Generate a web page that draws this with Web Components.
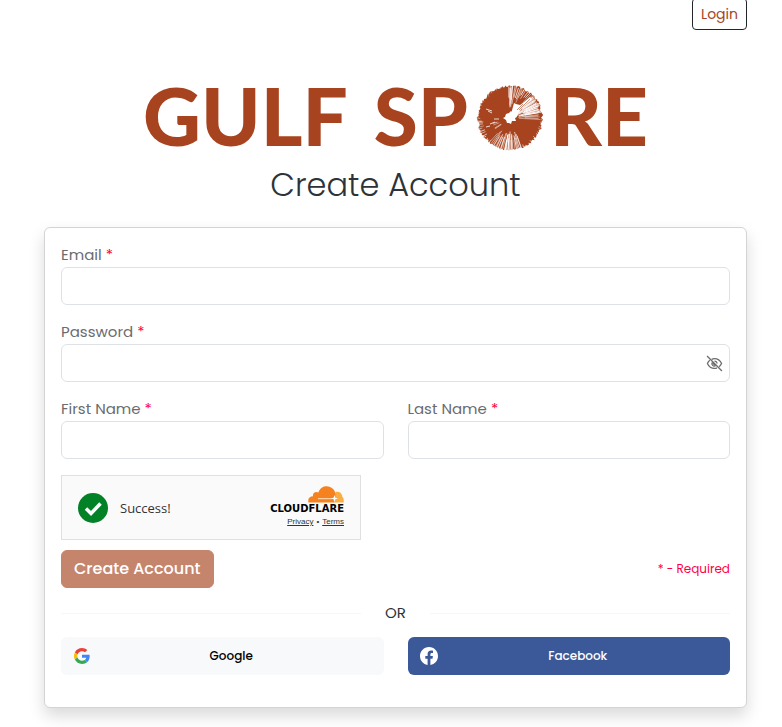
<!DOCTYPE html>
<html lang="en">
<head>
<meta charset="utf-8">
<meta name="viewport" content="width=device-width, initial-scale=1">
<title>Gulf Spore - Create Account</title>
<style>
    :root {
        --brand: #a7441f;
        --required: #ff0044;
    }

    body {
        margin: 0;
        background: #fff;
        color: #2d3338;
        font-family: Poppins, Inter, sans-serif;
        font-size: 15px;
    }
</style>
</head>
<body>
<signup-page>
    <signup-card>
        <form-field name="email" type="email">Email</form-field>
        <form-field name="password" type="password">Password</form-field>
        <form-field name="first" type="text" half>First Name</form-field>
        <form-field name="last" type="text" half>Last Name</form-field>
        <turnstile-box slot="check">Success!</turnstile-box>
        <social-button slot="social" brand="google">Google</social-button>
        <social-button slot="social" brand="facebook">Facebook</social-button>
    </signup-card>
</signup-page>

<script>
/**
 * The Gulf Spore wordmark, with a spore print in place of the O
 */
class SporeLogo extends HTMLElement {
    constructor() {
        super();
        const shadow = this.attachShadow({ mode: "open" });
        shadow.innerHTML = `
            <style>
                :host {
                    display: flex;
                    justify-content: center;
                    align-items: center;
                    color: var(--brand);
                    font: 900 80px/80px Lato, sans-serif;
                }
                .word { margin-right: 26px; }
                svg { width: 68px; height: 68px; margin: 6px 6px 0 8px; }
            </style>
            <span class="word">GULF</span>
            <span>SP</span>
            <svg viewBox="-34 -34 68 68" role="img" aria-label="O"></svg>
            <span>RE</span>`;
        shadow.querySelector("svg").innerHTML = this.drawPrint();
    }

    // Point on the print, angle in degrees clockwise from the right
    point(angle, radius) {
        const a = angle * Math.PI / 180;
        return (Math.cos(a) * radius).toFixed(2) + " " + (Math.sin(a) * radius).toFixed(2);
    }

    drawPrint() {
        let seed = 4211;
        const rand = () => {
            seed = (seed * 16807) % 2147483647;
            return seed / 2147483647;
        };

        // rough outer edge
        const edge = [];
        for (let a = 0; a < 360; a += 2) {
            edge.push(this.point(a, 31 + rand() * 2.2));
        }
        let out = `<path fill="currentColor" d="M${edge.join("L")}Z"/>`;

        // gaps between the gills: [from, to, count, inner, outer, width]
        const gaps = [
            [66, 130, 24, 14, 35, .7],
            [84, 100, 5, 6, 35, .8],
            [264, 292, 9, 14, 34, .7],
            [267, 274, 3, 4, 33, .9],
            [292, 320, 9, 20, 34, .7],
            [316, 350, 22, 8, 32, .8],
            [350, 364, 5, 8, 31, .5],
            [0, 66, 12, 29, 35, .6],
            [130, 180, 14, 27, 35, .6],
            [140, 162, 4, 10, 20, .6],
            [180, 262, 16, 30, 35, .5]
        ];
        gaps.forEach(([from, to, count, inner, outer, width]) => {
            for (let i = 0; i < count; i++) {
                const a = from + (to - from) * (i + rand()) / count;
                const start = inner + rand() * (outer - inner) * .4;
                const end = outer - rand() * 3;
                out += `<path stroke="#fff" stroke-width="${(width * (.6 + rand() * .7)).toFixed(2)}" d="M${this.point(a, start)}L${this.point(a + 1, end)}"/>`;
            }
        });

        // flecks on the left half
        out += `<path stroke="#fff" stroke-width=".8" d="M-24 -9l6 2M-22 -7l4 2M-20 6l5-2M-24 9l4-1M-16 1l5 0"/>`;

        // open wedge and hollow centre
        out += `
            <path fill="#fff" d="M1 -4 4 -15 6 -14 10 -13 14 -16 20 -21 22 -19 14 -12 9 -6 6 0Z"/>
            <path stroke="currentColor" stroke-width=".6" d="M7 -8 13 -14M9 -8 20 -19"/>
            <path fill="#fff" d="M-5 -1-4 -4 -1 -5 1 -7 3 -5 5 -4 8 -3 5 0 6 3 2 3 1 6-1 5-3 5-4 2-7 0Z"/>`;
        return out;
    }
}
customElements.define("spore-logo", SporeLogo);


/**
 * Page frame: login button, logo, heading and the slotted card
 */
class SignupPage extends HTMLElement {
    constructor() {
        super();
        const shadow = this.attachShadow({ mode: "open" });
        shadow.innerHTML = `
            <style>
                :host {
                    display: block;
                    padding: 0 35px 24px 44px;
                }
                header {
                    display: flex;
                    justify-content: flex-end;
                    margin-top: -2px;
                }
                .login {
                    padding: 4px 8px;
                    border: 1px solid #212529;
                    border-radius: 4px;
                    background: #fff;
                    color: var(--brand);
                    font: inherit;
                    font-size: 14px;
                    line-height: 22px;
                }
                spore-logo { margin-top: 45px; }
                h1 {
                    margin: 8px 0 20px;
                    font-size: 32px;
                    font-weight: 300;
                    line-height: 44px;
                    text-align: center;
                }
            </style>
            <header><button class="login" type="button">Login</button></header>
            <main>
                <spore-logo></spore-logo>
                <h1>Create Account</h1>
                <slot></slot>
            </main>`;
    }
}
customElements.define("signup-page", SignupPage);


/**
 * Card with the form fields, submit row and social logins
 */
class SignupCard extends HTMLElement {
    constructor() {
        super();
        const shadow = this.attachShadow({ mode: "open" });
        shadow.innerHTML = `
            <style>
                :host {
                    display: block;
                    padding: 16px 16px 32px;
                    border: 1px solid #d3d4d5;
                    border-radius: 6px;
                    background: #fff;
                    box-shadow: 0 8px 16px rgba(0, 0, 0, .15);
                }
                .fields, .social {
                    display: grid;
                    grid-template-columns: 1fr 1fr;
                    gap: 16px 24px;
                }
                .check { margin: 16px 0 10px; }
                .submit {
                    display: flex;
                    justify-content: space-between;
                    align-items: center;
                }
                .submit button {
                    height: 38px;
                    padding: 0 12px;
                    border: 1px solid var(--brand);
                    border-radius: 6px;
                    background: var(--brand);
                    color: #fff;
                    font: inherit;
                    font-size: 16px;
                    font-weight: 500;
                    line-height: 24px;
                    opacity: .65;
                }
                .submit small {
                    color: var(--required);
                    font-size: 12px;
                }
                .or {
                    display: flex;
                    align-items: center;
                    gap: 24px;
                    margin: 13px 0 12px;
                    line-height: 24px;
                }
                hr {
                    flex: 1;
                    margin: 0;
                    border: 0;
                    border-top: 1px solid #f6f7f8;
                }
            </style>
            <div class="fields"><slot></slot></div>
            <div class="check"><slot name="check"></slot></div>
            <div class="submit">
                <button type="submit" disabled>Create Account</button>
                <small>* - Required</small>
            </div>
            <div class="or"><hr><span>OR</span><hr></div>
            <div class="social"><slot name="social"></slot></div>`;
    }
}
customElements.define("signup-card", SignupCard);


/**
 * Labelled text box. Attributes: name, type, half (takes one column only)
 */
class FormField extends HTMLElement {
    constructor() {
        super();
        const shadow = this.attachShadow({ mode: "open" });
        const type = this.getAttribute("type");
        shadow.innerHTML = `
            <style>
                :host { display: block; grid-column: 1 / -1; }
                :host([half]) { grid-column: auto; }
                label {
                    display: block;
                    padding-bottom: 2px;
                    color: #6a6c6f;
                    line-height: 21px;
                }
                label span { color: var(--required); }
                .box { position: relative; }
                input {
                    display: block;
                    box-sizing: border-box;
                    width: 100%;
                    height: 38px;
                    padding: 6px 12px;
                    border: 1px solid #dee2e6;
                    border-radius: 6px;
                    background: #fff;
                    font: inherit;
                }
                .eye {
                    position: absolute;
                    top: 0;
                    bottom: 0;
                    right: 7px;
                    display: flex;
                    align-items: center;
                    padding: 0;
                    border: 0;
                    background: none;
                    color: #6c6c6c;
                }
                .eye svg { width: 17px; height: 17px; }
            </style>
            <label for="field"><slot></slot> <span>*</span></label>
            <div class="box">
                <input id="field" name="${this.getAttribute("name")}" type="${type}" required>
            </div>`;

        if (type === "password") {
            this.addToggle();
        }
    }

    // Show / hide button over the end of the password box
    addToggle() {
        const box = this.shadowRoot.querySelector(".box");
        const input = this.shadowRoot.querySelector("input");
        const toggle = document.createElement("button");
        toggle.type = "button";
        toggle.className = "eye";
        toggle.setAttribute("aria-label", "Show password");
        toggle.innerHTML = `
            <svg viewBox="0 0 24 24" fill="none" stroke="currentColor" stroke-width="1.800">
                <path d="M8 6.200C9.200 5.500 10.500 5 12 5c5 0 8.500 3.700 10 7-.8 1.700-1.900 3.200-3.400 4.500M15.500 18.200c-1 .5-2.200.8-3.500.8-5 0-8.500-3.700-10-7 .8-1.800 1.900-3.300 3.400-4.500"/>
                <path d="M12 8.500a3.500 3.500 0 0 1 3.500 3.500M8.700 10.500a3.500 3.500 0 0 0 4.800 4.700"/>
                <path d="M9 10.500l4.500 4.500" stroke-width="2.500"/>
                <path d="M1.500 1.500l21 21"/>
            </svg>`;
        toggle.addEventListener("click", () => {
            input.type = input.type === "password" ? "text" : "password";
        });
        box.append(toggle);
    }
}
customElements.define("form-field", FormField);


/**
 * Cloudflare verification box in its passed state
 */
class TurnstileBox extends HTMLElement {
    constructor() {
        super();
        const shadow = this.attachShadow({ mode: "open" });
        shadow.innerHTML = `
            <style>
                :host {
                    display: flex;
                    align-items: center;
                    box-sizing: border-box;
                    max-width: 300px;
                    height: 65px;
                    padding: 0 16px;
                    border: 1px solid #e0e0e0;
                    background: #fafafa;
                    color: #333;
                    font: 13px/20px "Segoe UI", "Open Sans", sans-serif;
                }
                .tick { width: 30px; height: 30px; margin-right: 12px; }
                .brand {
                    display: flex;
                    flex-direction: column;
                    align-items: flex-end;
                    margin-left: auto;
                }
                .cloud { width: 36px; height: 17px; }
                b {
                    color: #000;
                    font: bold 10px/12px "DejaVu Sans", sans-serif;
                }
                .links {
                    display: flex;
                    gap: 3px;
                    font: 8px/14px "Liberation Sans", sans-serif;
                }
                a { color: inherit; }
            </style>
            <svg class="tick" viewBox="0 0 30 30">
                <circle cx="15" cy="15" r="15" fill="#038127"/>
                <path d="M8 15.500l5 5 9.500-10" fill="none" stroke="#fff" stroke-width="3.500"/>
            </svg>
            <slot></slot>
            <div class="brand">
                <svg class="cloud" viewBox="0 0 36 17">
                    <path fill="#fbad41" d="M25.500 16.500 27.500 6c4-.8 6.500 1.500 6.700 4.500 1.300 1 1.800 3.200 1.500 6z"/>
                    <path fill="#f6821f" d="M.4 16.500C-.4 12.500 1.700 10.300 5 10.300 4.500 7 7.500 5 10.300 6.600 12 2 15.200.2 18.600.2c5 0 8.600 3.600 8.900 8.300l-1.500 8z"/>
                    <path fill="#fde3c8" d="M10 12.200h14v1H10z"/>
                    <path fill="#fff" d="M23 12.200l2.600-.5.900-2.700.8 2.700 2.700.7-2.700.9-.8 2.700-1-2.700z"/>
                </svg>
                <b>CLOUDFLARE</b>
                <div class="links"><a href="#privacy">Privacy</a><span>•</span><a href="#terms">Terms</a></div>
            </div>`;
    }
}
customElements.define("turnstile-box", TurnstileBox);


/**
 * Social login button. Attribute brand is "google" or "facebook"
 */
const BRAND_ICONS = {
    google: `
        <svg viewBox="0 0 48 48">
            <path fill="#ea4335" d="M24 9.500c3.540 0 6.710 1.220 9.210 3.600l6.850-6.850C35.900 2.380 30.470 0 24 0 14.620 0 6.510 5.380 2.560 13.220l7.980 6.190C12.430 13.720 17.740 9.500 24 9.500z"/>
            <path fill="#4285f4" d="M46.980 24.550c0-1.570-.15-3.090-.38-4.550H24v9.020h12.940c-.58 2.960-2.260 5.480-4.780 7.180l7.730 6c4.510-4.180 7.090-10.360 7.090-17.650z"/>
            <path fill="#fbbc05" d="M10.530 28.590c-.48-1.450-.76-2.990-.76-4.590s.27-3.140.76-4.590l-7.980-6.190C.92 16.460 0 20.120 0 24c0 3.880.92 7.540 2.560 10.780l7.970-6.190z"/>
            <path fill="#34a853" d="M24 48c6.480 0 11.930-2.130 15.890-5.810l-7.730-6c-2.150 1.450-4.920 2.300-8.160 2.300-6.260 0-11.570-4.220-13.470-9.910l-7.980 6.190C6.510 42.620 14.620 48 24 48z"/>
        </svg>`,
    facebook: `
        <svg viewBox="0 0 16 16">
            <path fill="#fff" d="M16 8.049c0-4.446-3.582-8.050-8-8.050C3.580 0-.002 3.603-.002 8.050c0 4.017 2.926 7.347 6.750 7.951v-5.625h-2.030V8.050H6.750V6.275c0-2.017 1.195-3.131 3.022-3.131.876 0 1.791.157 1.791.157v1.980h-1.009c-.993 0-1.303.621-1.303 1.258v1.510h2.218l-.354 2.326H9.250V16c3.824-.604 6.750-3.934 6.750-7.951"/>
        </svg>`
};

class SocialButton extends HTMLElement {
    constructor() {
        super();
        const shadow = this.attachShadow({ mode: "open" });
        shadow.innerHTML = `
            <style>
                :host { display: block; }
                button {
                    display: grid;
                    grid-template-columns: 18px 1fr;
                    align-items: center;
                    justify-items: center;
                    width: 100%;
                    height: 38px;
                    padding: 0 12px;
                    border: 0;
                    border-radius: 6px;
                    background: #f8f9fa;
                    color: #000;
                    font: inherit;
                    font-size: 12px;
                    font-weight: 500;
                }
                :host([brand="facebook"]) button {
                    background: #3b5998;
                    color: #fff;
                }
                svg { width: 18px; height: 18px; }
                :host([brand="google"]) svg { width: 16px; height: 16px; }
            </style>
            <button type="button">${BRAND_ICONS[this.getAttribute("brand")]}<span><slot></slot></span></button>`;
    }
}
customElements.define("social-button", SocialButton);
</script>
</body>
</html>
